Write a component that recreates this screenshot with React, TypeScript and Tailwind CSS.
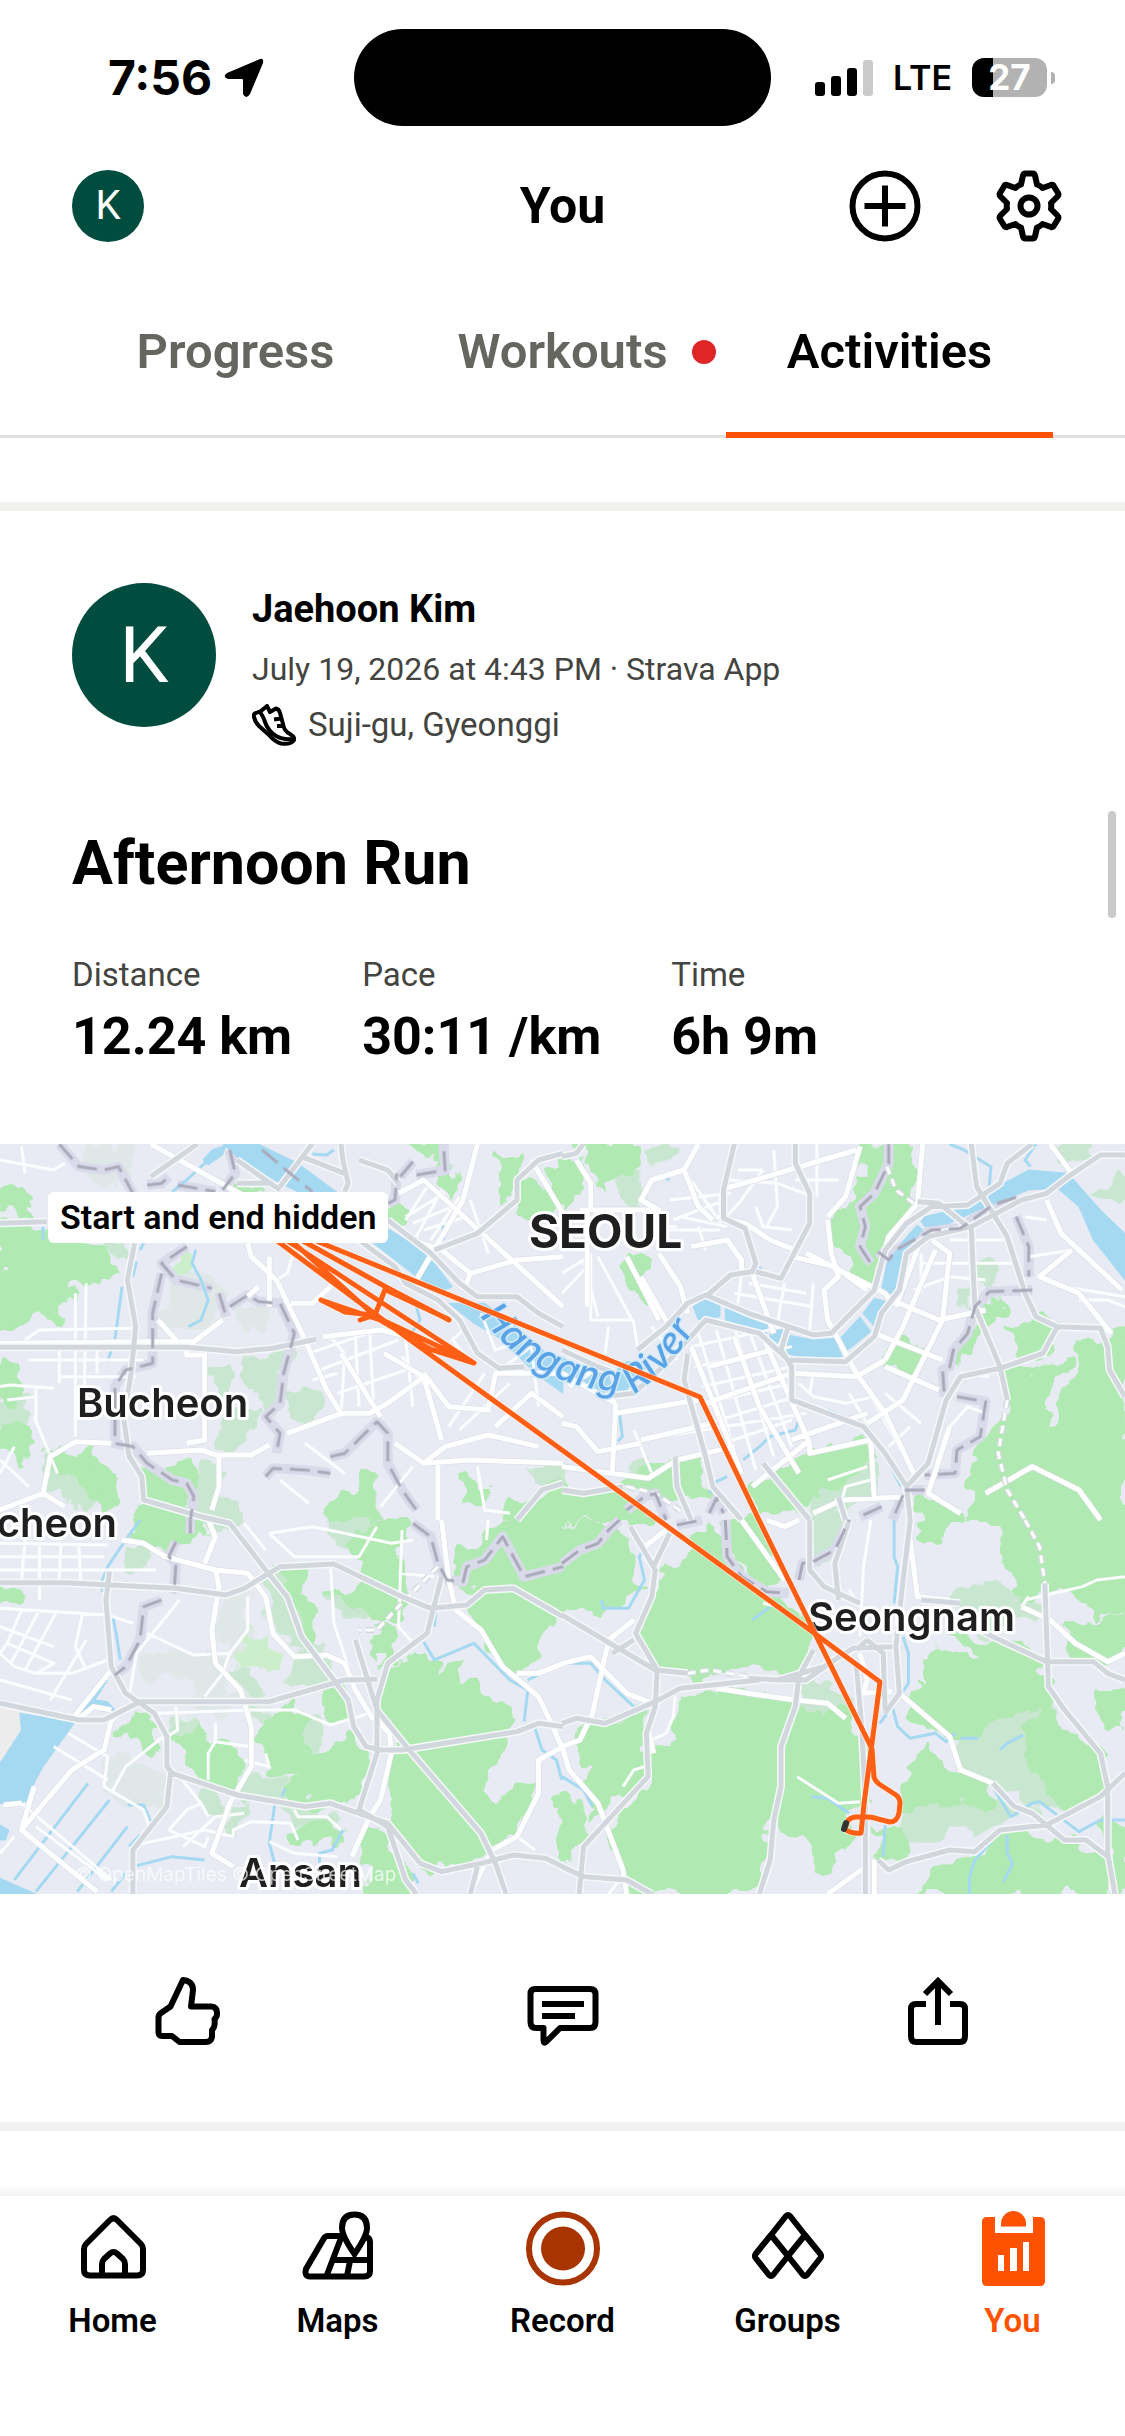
import React from 'react';

/* ---------- map data ---------- */

// The map is stored as four tiles that share one drawing scale.
const tiles = [
  {
    id: 'nw',
    transform: 'matrix(0.359 0 0 0.3333 0 -4)',
    pale: 'M140 940L260 1060 240 1100 190 1080 135 1030Z M320 305 370 310 370 330 340 345 300 320Z M10 770 90 800 60 850 0 850Z M560 970L600 960 600 1080 660 1110 620 1150 540 1140 540 1040Z M585 680L640 665 655 730 600 760Z M700 650L780 640 780 740 760 820 725 830 740 740 690 730Z M620 840L700 830 700 880 650 920 620 890Z M800 760L880 740 900 800 870 840 820 830Z M1490 990 1568 980 1568 1050 1500 1030Z',
    faint: 'M470 450L510 410 560 410 620 470 590 530 500 550 450 530Z M250 20L380 30 360 110 330 140 230 90Z M660 510 740 510 740 550 700 560Z',
    lime: 'M500 370L540 350 540 410 500 400Z',
    park: 'M0 150L60 160 80 180 60 195 75 225 0 230Z M0 265L130 265 190 310 300 340 280 375 310 400 240 430 190 440 200 480 170 500 150 540 110 520 90 540 40 560 0 570Z M150 935L240 940 270 975 320 1030 330 1070 300 1110 270 1060 220 1030 180 985 150 975Z M0 640L60 650 50 700 30 780 0 760Z M10 850 80 860 100 920 60 960 40 940 10 930Z M400 990L460 1000 520 970 540 1030 500 1110 400 1080Z M350 1130L400 1085 530 1130 530 1200 400 1200Z M1010 1000L1040 1030 1030 1080 1050 1140 940 1140 930 1080 980 1050Z M1290 1015L1340 1040 1330 1090 1290 1100Z M1530 1060 1568 1040 1568 1140 1420 1140 1440 1090Z M1090 205L1130 210 1110 250 1080 240Z M1240 100 1280 110 1250 170 1230 150Z M1150 20L1240 20 1240 90 1200 60Z M1380 30L1460 40 1430 90 1450 140 1400 170 1380 110Z M1460 155L1540 150 1530 210 1500 260 1460 200Z M1530 80 1568 60V200L1540 160Z M660 140L720 145 740 160 660 165Z',
    water: 'M620 12L720 12 830 70 930 150 1080 265 1190 340 1260 440 1230 455 1160 410 1040 310 900 190 780 130 680 70Z M1250 490L1350 490 1420 540 1500 620 1568 680V760L1490 700 1400 600 1320 550Z M565 60L590 30 630 15 620 45 580 75Z',
    stream: 'M580 60L520 120 480 155 M870 42 910 45 930 30 M120 260V300 M400 310 390 330 M380 365 370 410 M340 440 320 600 M310 630 300 665 M545 330 535 370 560 420 580 480 560 540 525 560 M1235 240V300 M1160 500 1170 540 1140 590',
    minor: 'M0 740L30 735 150 745 M20 780 100 770 M95 830 160 1000 M100 850V740 M165 610V730 M210 460V890 M240 430L235 760 M70 600 110 570 370 565 M270 620V700 M80 660H400 M170 710H380 M860 640 1080 560 M890 690 1110 600 M940 760 1130 690 M950 830 960 640 920 590 M1000 800 990 590 M1040 780 1030 580 M1150 800 1130 600 M1130 230L1240 160 M1150 250 1260 200 M1180 270 1300 230 M1190 140 1130 240 M1230 150 1160 290 M1280 170 1200 300 M1380 700 1480 620 1500 800 M1250 860 1350 700 M1280 870 1420 730 M1310 180 1360 340 M0 60L150 90 180 70 M60 20 70 100 M1340 520 1380 630 1460 600 1400 530 M780 1020L860 1090 M960 1000 850 910 M1150 980 1060 1100 M0 960 80 1040 M40 920 0 1000 M820 330 800 400 770 420 M1300 560 1260 600 1300 650 M1120 650 1200 760 M870 720 940 700 M1330 980 1350 1110 1420 1120',
    major: 'M0 610L400 605H540L620 540 M440 540 490 600 M410 940L560 930 600 945H700L750 915 M610 945V1040L590 1110 M120 1060L140 950 210 905 310 910 M120 1060L0 1110 M120 1060L180 1100 M520 620V645H570V900L520 910 M690 310L700 350 770 420 850 600 910 750 950 820 1030 820 1080 790 1180 710 M750 350V500 M950 820L800 880 M1100 910L1180 970 1310 960 1568 970 M1180 700L1250 800 1360 810 1380 700 1560 700 M1180 970 1240 920 1360 885 1500 920 M1180 600 1060 570 900 590 M1300 430L1310 400 1230 330 1150 300 M1310 400 1440 360 1568 350 M1480 60 1568 220 M420 12L700 180 M1110 160L1180 120 1568 500 M1220 1140V960 M1060 830 950 640 M1070 640 1180 710 1230 900 M1380 860 1480 760 1568 830 M1330 12 1290 180 1160 420 M720 440 690 470 M810 490 870 490 930 430',
    highway: 'M0 622H520L660 635 760 625 880 598 M0 250L130 245 M375 310L355 420 378 560 365 700 345 840 360 950 395 1010 400 1080 560 1130 640 1150 M1080 240L1200 340 1280 430 1330 470 1440 470 1500 520 1568 560 M1000 300 1100 380 1130 430 1220 480 1280 540 1330 640 1390 685 1460 680 M420 110L500 50 550 12 M660 60 780 150 M780 140L850 40 870 12 M840 50L960 100 M1000 60 1080 90 1110 130 M950 12 955 60 970 130 960 155 M1210 330L1330 280 1440 180 1440 120 1500 60 1568 40 M660 130H760 M1440 1140 1510 1050 1568 1030',
    tunnel: '',
    border: 'M165 12L220 80 290 90 330 80 370 160 M410 135 450 130 470 110 M495 135 600 155 M640 30 655 100 620 150 M730 30 870 155 M1115 110 1150 65 M1160 105 1240 90 1235 12 M1080 190 1100 180 1105 100 M520 320 450 370 490 420 590 445 M450 400L425 520V670L350 690 320 740 320 910 370 920 410 970 480 1020 520 1030 540 1070 530 1140 M610 460 630 530 M640 500 690 465 720 485 780 490 820 580 790 700 780 790 740 830 780 880 770 940 M740 1010 760 985 850 990 920 1000 M920 950 960 940 1050 845 1080 880 1080 970 1120 1050 1160 1110',
  },
  {
    id: 'ne',
    transform: 'matrix(0.359 0 0 0.3333 562 -4)',
    pale: 'M1160 370 1200 375 1195 430 1160 420Z M1100 440 1150 450 1140 490 1110 470Z M160 100 210 90 215 180 190 210Z M230 30 310 30 290 70 240 60Z M1400 12H1470L1480 50 1410 60Z M1568 100 1500 150 1490 170 1568 170Z M200 970 240 960 240 1000 200 1000Z M700 1060 840 960 870 1060 760 1130 700 1130Z',
    faint: '',
    lime: '',
    park: 'M40 12L200 12 190 90 150 100 120 140 80 80 50 40Z M0 40L40 70 30 100 50 160 0 210Z M160 360L185 350 195 375 240 365 250 390 225 420 245 475 190 455 180 400Z M850 20L985 30 990 100 970 140 950 200 930 260 880 290 870 310 880 400 840 430 800 380 810 340 760 300 770 220 830 180 830 120Z M930 605L1000 635 980 700 910 665Z M1180 500L1230 490 1210 550 1160 580 1130 650 1100 680 1130 590Z M1250 560L1350 545 1370 560 1350 640 1280 660 1270 610Z M1568 580L1500 620 1470 590 1440 610 1420 720 1390 760 1380 850 1340 880 1320 800 1350 750 1400 660 1330 690 1240 700 1250 800 1190 860 1160 950 1130 1010 1140 1140H1568Z M260 990L380 950 410 1010 390 1050 430 1090 300 1080 180 1020Z M530 1050L640 960 760 930 840 900 860 960 800 1000 780 1030 700 1060 660 1110 620 1100 560 1120Z M0 1060L150 1060 160 1090 200 1100 250 1140H0Z M1000 1060L1090 1110 1120 1140H1010Z M690 920 730 905 700 935Z',
    water: 'M180 665L240 670 220 700 180 750 140 757 150 690Z M0 650L60 700 130 700 140 755 90 760 0 700Z M365 500L400 475 440 490 440 530 380 540Z M455 505L575 550 570 580 455 540Z M590 560L620 570 600 610 578 590Z M630 585L700 600 760 595 780 650 700 660 620 640Z M775 595L830 530 860 575 820 610 790 635Z M838 520L870 475 905 485 880 540 870 560Z M888 460L905 370 960 290 990 255 1005 270 950 340 925 460Z M1000 245L1010 230 1090 210 1160 180 1230 130 1300 90 1410 100 1500 210 1568 280V420L1480 300 1440 200 1380 145 1300 150 1180 200 1080 250 1010 260Z',
    stream: 'M1080 12 1120 30 1150 50 1195 80 1190 140 M1320 12 1290 60 1305 80 M335 90 365 125 M290 120 300 115 M160 820 168 890 155 905 M740 810 850 860 890 930 945 1040 M660 840 650 870 580 890 550 920 505 960 M460 1010 430 1025 410 1060 M440 425 415 455 M560 400 550 380',
    minor: 'M380 580L500 1000 M430 570 540 990 M480 560 590 950 M520 570 640 920 M560 590 690 910 M360 620 620 560 M370 680 640 620 M390 740 640 680 M400 790 640 730 M410 850 650 770 M220 900 680 820 M450 910 640 840 M700 700 690 760 M820 690 980 1000 M850 850 800 760 M740 1020 850 980 M900 760 1000 850 M970 860 910 920 M1080 860 1130 800 1180 820 M1000 340V460 M1080 300H1250 M1000 370H1260 M980 450 1080 410 1180 420 M450 240 500 180 560 90 M490 90H560 M460 120 600 130 700 170 M540 200 560 260 640 270 M590 30 600 200 570 260 M710 12V170 M650 120H770 M480 460 700 500 M500 400 490 490 M520 430 680 460 M500 520 600 560 M700 430 690 570 M620 430 600 550 M80 340V540H200 M0 400 60 360 100 530 M0 460 70 380 M100 350 200 550 210 620 M240 260H320 M300 270H440 M340 90 430 230 M310 240 380 210 460 180 M300 180 470 160 M330 230 460 260 M380 260 400 330 M440 160V250 M660 730 700 770 790 790 870 770 M1110 700 1190 710 M1290 230 1350 240 M1300 350 1420 330 M1400 440 1568 470 M200 870 250 1000 M130 560 120 640 M250 560 320 660 M1440 480 1520 480 1568 500 M780 1080 790 1040 860 1020',
    major: 'M40 60 80 130V210 M180 350 270 540 M220 410 300 560 M70 210V500 M50 210H270L220 180 250 120 340 90 380 12 M270 340 330 440 350 520 M340 90 380 200 420 240 M360 320 460 300 500 360V400 M440 150 570 110 820 30 M430 230 510 250 580 300 650 330 M640 350 760 380 850 450 M680 340 900 460 920 490 M740 240 750 340 770 410 730 450 740 540 820 700 M830 20 790 170 740 230 M530 400 590 580 M380 780 150 820 M220 900 420 850 M360 620 500 1000 M480 590 550 800 660 1000 M560 590 690 910 M410 680 620 620 M400 790 640 700 820 710 900 660 M940 490 1050 540 1180 510 M870 580 1060 660 M900 680 1050 750 M900 660 950 560 1040 330 M850 850L950 780 1060 540 1080 340 1030 300 M640 900 850 820 M820 700 900 820 980 1000 M1000 300 930 500 M1005 12L990 190 910 290 880 400 M1360 12 1420 100 M1350 180 1390 280 1560 450 M1420 330 1330 410 1440 460 1530 580 M0 850 40 860 100 935 220 910 M150 790 140 1000 M0 980 240 1015 320 960 480 920 M690 910V940L860 900 M690 900 530 1040 M700 1120 780 1080 960 1070 M860 900 870 1080 M1080 860 1020 1060 1110 1120 M1180 1060 1310 980 1440 1050 1500 1140 M0 700 150 790 M100 680 20 740',
    highway: 'M0 50 40 40 60 12 M0 630L100 680 150 700 M120 770L200 760 300 660 400 540 550 580 630 660 790 665 870 590 890 520 940 450 960 340 1020 290 1140 260 1280 180 1350 160 1410 110 1500 45H1568 M210 630L290 560 350 490 400 465 520 520 700 585 750 580 870 450 900 330 960 250 1030 200 1130 195 1220 130 1240 70 1310 12 M480 12L450 150 450 235 510 265 540 370 530 395 470 405 400 470 M540 395L610 415 690 250 690 160 650 70V12 M630 560 610 630 640 680V780L840 860 900 940 960 1040 M350 640L340 720 400 950 420 1040 500 1140 M1140 12L1155 140 1240 290 1290 460 1320 530 1380 560 1500 565 1520 620 1525 690 1568 770 M1140 260L1150 500 1220 680 1240 780 M1380 560L1340 640 1220 685 1110 710 1070 780 1020 970 960 1040 970 1140 M560 970L690 1140 M315 950L320 1040 360 1140 M990 185 1050 190 1130 260 M770 1070 790 1140 M0 1050 60 1060 170 1040',
    tunnel: 'M1240 780L1215 940 1240 1050 1290 1140 M905 80 930 150 980 190 M180 1040 260 1060 340 1120',
    border: 'M910 12 910 70 870 160 830 200 845 260 830 320 860 370 M880 335 910 360 930 330 1030 270 1110 265 1200 195 1270 170 M1265 230 1300 320V410 M1310 450 1190 455 1150 500 1130 580 1090 630 1080 680 1060 690 1065 770 M1100 770 1180 785 1165 890 1100 930 1095 1000 1010 1005 M955 1050 1010 1050 M950 1065 920 1140 M890 1100 830 1130 M180 1110 230 1070 260 1060 290 1140 M410 1120 430 1075 450 1120',
  },
  {
    id: 'sw',
    transform: 'matrix(0.359 0 0 0.3333 0 376)',
    pale: 'M350 90H420V130H370Z M740 200L800 180 830 290 860 380 930 400 920 480 810 490 850 400 770 310Z M670 440 700 440 725 520 700 530Z M690 760L780 780 790 830 680 820Z M480 600 530 590 560 620 490 660Z M870 590 900 620 880 680 840 680Z M560 830L610 850 610 880 570 890Z M640 860 680 840 660 930 630 930Z M930 0H1050L1030 80 970 90 920 40Z M710 580H760L740 620 710 610Z M790 860 900 850 950 900 940 930 880 890 800 900Z M930 220 1040 260 1000 300 940 270Z',
    faint: 'M380 420L440 380 560 410 640 420 620 520 560 530 520 480 420 470Z M300 710L400 720 450 760 440 880 400 870 290 800Z M540 540H760L740 575H540Z M620 240L690 220 690 330 640 400 610 350Z',
    lime: 'M650 390L700 340 740 340 730 380 780 400 750 440 650 410Z',
    park: 'M370 0H560L570 40 500 90 430 90 370 50Z M0 195L60 230 50 260 0 250Z M970 80L1050 20 1120 10 1110 90 1130 150 1140 240 1080 300 1040 310 1030 270 940 220 1030 170 1010 120Z M1280 80L1340 70 1440 0H1568V280L1520 330 1490 370 1500 420 1420 440 1380 380 1340 330 1310 260 1320 200 1270 180Z M790 150H845L860 290 870 400 840 320Z M1040 350L1080 330 1120 370 1100 420 1050 420Z M900 510L960 500 965 610 930 600 890 560Z M1080 450L1160 415 1210 430 1200 480 1240 450 1290 440 1270 500 1330 500 1370 550 1430 600 1390 660 1380 720 1340 790 1400 850 1430 800 1470 800 1440 940 1350 990 1310 1010 1200 1050 1130 960 1070 900 1090 700 1140 690 1060 620 1050 540Z M340 600L360 580 420 585 410 610 440 650 400 670 330 640Z M490 660L520 670 560 620 580 680 600 660 660 680 670 780 650 820 560 780 540 760 500 700Z M740 600L820 570 860 600 830 650 850 690 920 690 980 660 1020 720 1010 790 990 850 920 830 880 850 850 830 810 840 800 790 850 770 750 750 760 690 720 660Z M830 920L880 890 930 900 940 930 930 960 880 990 840 960Z M1030 930L1080 940 1120 1060 1140 1122H1040L1015 1030Z',
    water: 'M55 580L210 605 120 740 90 800 95 830 50 855 0 850V730L60 630Z M300 480L265 540 300 545 320 570 290 575 260 560 230 590 210 580Z M0 915L25 930 15 960 0 960Z M0 1075L100 1122H0Z',
    stream: 'M245 790L40 1080 M305 840L100 1115 M355 920L215 1115 M390 945L360 980 M350 1060 310 1115 M370 1040 480 1010 570 1020 M355 855L400 855 420 905 M765 855L750 970 765 1030 M795 805 785 830 M955 930L925 990 890 1000V1030 M390 0L350 60 300 140 285 180V215 M315 290L325 350 335 420 M1220 190L1210 320 M1180 365L1210 420 1320 370 1420 480 1470 510 1460 605 M1490 625L1510 690 1550 720 1565 780 M1165 1090L1150 1060 M1470 480 1568 430',
    minor: 'M0 70 300 75 M0 110 290 110 M0 150 435 150 M70 60 60 180 M110 70V240 M170 70 165 180 M220 80 225 180 M0 265 300 285 370 310 M60 270 20 370 0 400 M110 270 30 430 M160 270 70 450 M230 280 210 380 240 450 M0 320 150 380 M20 370 150 430 100 460 40 440 0 400 M240 360 140 540 M0 480 200 540 M300 420 200 460 100 460 M500 240 380 400 360 530 M410 340 540 405 640 400 690 330V230 M570 530 620 460 640 400 M440 580 700 570 820 570 920 615 1030 580 M490 560 495 630 450 660 M600 610V665L580 700V780 M600 665 700 680 M740 700 750 740 680 720 M455 650 350 740 310 820 M150 680 300 780 M190 640 300 710 290 800 400 870 420 930 M60 850 180 960 310 1080 M100 920 300 1080 M500 770 560 850 580 890 M470 930 520 870 560 850 M470 930 570 980 580 950 M380 975 570 930 650 950 M510 980 600 890 680 880 M650 950V930L700 905 810 910 830 960 M750 965 820 1000 940 1010 M820 870 830 890 910 890 950 930 M750 40 820 110 1000 110 1050 20 M750 40 870 20 960 40 1090 70 1150 60 M920 120 930 310 970 440 M1120 30 1110 320 1160 380 M1110 160 1210 170 M680 10 740 90 M1360 0 1355 60 M0 1000 40 950 M1440 950 1490 990',
    major: 'M340 60L400 70 460 110 600 150 690 160 740 230 760 340 820 410 910 405 960 430 990 510 1040 600 M1050 600 1085 640 1090 700 1060 840 1030 890 980 1010 M580 0 600 50 570 130 M600 150L610 200 590 330 600 430 670 510 700 620 700 740 640 850 590 1000 650 1040 M1230 0L1250 180 1270 270 1340 330 1400 440 1500 530 1540 620 1568 690 M1440 460 1500 460 1568 430 M1568 680L1500 720 1500 820 1440 950 1370 990 1310 1122 M310 450L210 585 M380 540L310 600 290 690 200 750 60 930 270 1115 M215 600 260 560 310 570 M95 800 60 930 M10 855 60 850',
    highway: 'M560 -10L640 10 740 150 800 230 840 350 930 480 970 540 985 620 1020 680 1060 690H1120L1440 635 1500 610 1568 620 M0 188H180L490 205 630 225 680 205 780 140 930 132 1120 230 1200 265 1300 255 1350 210 1430 205 1568 290 M305 155L295 240 310 440 350 520 430 580 465 650V740L480 760 660 825 850 860 920 850 1080 910 1170 1030 1230 1055 1340 1030 1430 1005 1520 1015 1568 1040 M0 550L220 600 290 600 390 545H750L960 480 1050 478 M475 760L465 860 370 990 370 1122 M990 360L1050 570 1140 690 1260 840 1340 940 1380 1030 1410 1122 M1230 170L1190 340 1080 430 1050 540V700L1000 870 1080 920 1130 1080 1160 1122 M1330 1040 1310 1122',
    tunnel: 'M1220 140 1110 260 1050 330 1000 330',
    border: 'M530 0V40 M490 65 470 110 490 130 485 220 M450 240 400 260 390 360 350 440 320 465 M1150 10 1200 50 1220 130 1245 180 1290 185 1300 140 1350 120 1400 50 1460 170 1568 140',
  },
  {
    id: 'se',
    transform: 'matrix(0.359 0 0 0.3333 562 376)',
    pale: 'M1090 240L1180 200 1280 220 1330 290 1200 330Z M670 490 800 510 780 590 650 560Z M690 0H800L770 80 690 120Z M220 570 230 600 100 620Z M1120 640L1250 560 1320 500 1400 640 1480 720 1440 850 1330 880 1210 790 1110 750Z M960 850 1080 800 1180 800 1250 870 1150 920 960 960Z',
    faint: '',
    lime: '',
    park: 'M0 20L100 20 170 60 210 120 200 200 160 240 100 300 60 260 0 270Z M300 120L330 150 400 20 470 100 520 190 610 240 690 320 700 390 620 470 520 450 370 470 270 450 220 340 260 200Z M470 0H520L620 170 560 190 480 80Z M60 620L220 600 240 660 230 770 100 880 70 800 80 740 50 690Z M0 840 70 870 60 960 20 1010 0 1010Z M320 530L480 510 600 540 640 560 600 740 590 900 540 960 560 1040 500 1122H200L130 960 240 790 250 700 330 660 300 620Z M660 560L700 550 720 580 780 570 800 610 850 700 830 850 820 880 780 890 800 940 750 1060 700 1040 680 960 610 920 610 780 640 640Z M880 930L950 940 960 1000 880 1020Z M1000 0H1100L1060 60 1000 50Z M1240 0H1568V260L1480 280 1440 220 1400 200 1290 240 1280 140 1230 90Z M1000 420L1100 400 1150 430 1200 410 1280 440 1360 470 1340 560 1290 570 1240 590 1160 610 1110 640 1030 640 960 600 1000 500Z M1340 560L1420 660 1500 710 1500 820 1400 870 1340 800 1290 680Z M960 790L1010 690 1090 750 1180 790 1200 830 1080 850 960 880Z M1400 330L1568 280V400L1500 420 1430 400Z M1500 520L1550 530 1560 620 1510 640 1480 570Z M990 1122L1080 1040 1180 1000 1240 930 1400 960 1500 1010 1520 1122Z M1530 900 1568 940V1122H1545Z M1080 330 1180 350 1340 420 1330 450 1160 390Z',
    water: '',
    stream: 'M110 240L115 265 185 265 230 180 215 110 240 70 265 45 M0 430L80 430 120 480 200 560 M0 770L60 810 85 860 M925 0V110L935 140 925 250 M950 350L965 400V490L920 560 885 610 M920 560L935 620 970 655 1040 640 1070 665 1095 640 M1110 655H1160 M1220 690L1240 670 1285 645 M695 830L740 835 800 880 M900 915L895 1010 M1200 960L1150 1020 1135 1070V1122 M1240 945V1000L1255 1030 1230 1085 M1200 800 1250 890 1310 850 1330 845 1440 935 1500 900 1568 900 M530 300L580 260',
    minor: 'M860 0 840 140 830 350 M315 530 310 590 290 640 250 660V700 M230 740 200 750 170 800 M655 770L770 850 830 845 M1290 240L1450 200 1490 180 1568 170 M1300 230 1280 260 M800 210 830 260 M130 1122 160 1080 M560 250 600 260',
    major: 'M0 430L80 410 180 520 240 545 M200 300L130 360 85 580 50 660 0 680 20 750 100 850 170 1050 180 1122 M430 505L550 525 650 540 740 550 790 595 M830 400 850 480 840 520 920 515 M970 60L990 230 1080 240 M500 0 620 180 M570 0 620 20 660 0 M940 520L1080 650 1110 750 1200 790 M1280 260L1360 300 1430 370 1520 425 1568 400 M870 1020V1122 M840 1045 740 1122 M230 80 290 30 M240 620 255 700',
    highway: 'M0 285L260 450 350 460 M520 475L600 480 730 440 810 385 920 380 M0 610L40 595 120 610 260 545 330 505 550 480 M600 480H680L740 435 M190 20L260 150 250 230 205 340 265 450 260 560 235 640 240 770 60 980 48 1122 M300 40 255 140 M700 390L660 470 650 560 610 680 610 800 590 900 580 1020 550 1122 M970 0L950 180 930 380 940 520 900 580 M850 360L895 400 900 570 M850 360 820 390 M690 0L690 150 730 200 830 250 M820 440L835 620 845 850V1122 M800 0L760 130 770 240 M1345 190L1355 500 1400 570 1500 700 1520 800V1000L1540 1122 M1000 240 1110 250 M1110 300L1200 350 1350 425H1480L1520 460 1568 480 M1568 760L1500 830 1350 915 1220 930 1150 995 1080 990 960 1025 910 1050 880 1020 M1200 790L1260 860 1310 880 1400 960H1460L1520 1010 M0 1040L60 1070 180 1080 250 1122 M200 360 140 400',
    tunnel: 'M1290 0L1330 80 1345 190 M350 460L410 450 520 470',
    border: 'M0 130 50 90 100 70 130 30 160 0 M320 15 390 0 M455 0 460 110 500 170 570 215 630 220 M660 180 670 130 700 125 760 90 800 0',
  },
];

type LayerKey = 'pale' | 'faint' | 'lime' | 'park' | 'water' | 'stream' | 'minor' | 'major' | 'highway' | 'tunnel' | 'border';

interface LayerStyle {
  key: LayerKey;
  fill?: string;
  stroke: string;
  width: number;
  dash?: string;
  ragged?: boolean;
}

// painted from bottom to top
const layers: LayerStyle[] = [
  { key: 'faint', fill: '#dfe8e7', stroke: '#dfe8e7', width: 5, ragged: true },
  { key: 'pale', fill: '#c9e7d0', stroke: '#c9e7d0', width: 6, ragged: true },
  { key: 'park', fill: '#b0e9b2', stroke: '#b0e9b2', width: 6, ragged: true },
  { key: 'lime', fill: '#cdeecb', stroke: '#cdeecb', width: 4, ragged: true },
  { key: 'border', stroke: '#dadbea', width: 10 },
  { key: 'water', fill: '#a5d9f1', stroke: '#a5d9f1', width: 1 },
  { key: 'stream', stroke: '#a5d9f1', width: 3 },
  { key: 'minor', stroke: '#fcfdfe', width: 3 },
  { key: 'major', stroke: '#d9dce3', width: 6 },
  { key: 'major', stroke: '#ffffff', width: 5 },
  { key: 'tunnel', stroke: '#d3d8df', width: 6, dash: '8 5' },
  { key: 'tunnel', stroke: '#ffffff', width: 3, dash: '8 5' },
  { key: 'highway', stroke: '#f6f8fa', width: 8 },
  { key: 'highway', stroke: '#d2d7de', width: 5 },
  { key: 'border', stroke: '#a9a9b9', width: 3, dash: '20 8' },
];

const cities = [
  { name: 'SEOUL', x: 529, y: 104, anchor: 'start', size: 'text-[46px] font-bold' },
  { name: 'Bucheon', x: 77, y: 273, anchor: 'start', size: 'text-[40px] font-semibold' },
  { name: 'Incheon', x: 117, y: 393, anchor: 'end', size: 'text-[40px] font-semibold' },
  { name: 'Seongnam', x: 808, y: 487, anchor: 'start', size: 'text-[40px] font-semibold' },
  { name: 'Ansan', x: 239, y: 743, anchor: 'start', size: 'text-[40px] font-semibold' },
] as const;

const route =
  'M294 92L386 143 449 176 M386 143L375 171 360 176 M386 146L448 175 M309 94L700 253 759 376 872 605 874 633 Q875 637 879 640 L896 651 Q900 654 900 659 L899 669 Q897 678 890 678 L878 675 Q870 672 855 673 Q847 674 846 682 M846 686Q852 690 861 689 L864 660 880 538 810 486 562 306 406 193 276 96 M280 92L474 219 430 205 380 176 321 156 M284 90L376 173 474 219 M321 156L345 168 373 171';

const RouteMap: React.FC = () => (
  <div className="relative overflow-hidden bg-[#e8ebf4]">
    <svg viewBox="0 0 1125 750" className="block w-full font-['Inter',sans-serif]" role="img" aria-label="Route map">
      <filter id="ragged" filterUnits="userSpaceOnUse" x="-20" y="-20" width="1165" height="790">
        <feTurbulence type="fractalNoise" baseFrequency="0.035" numOctaves="3" seed="4" />
        <feDisplacementMap in="SourceGraphic" scale="34" xChannelSelector="R" yChannelSelector="G" />
      </filter>

      <g strokeLinecap="butt" strokeLinejoin="round">
        <path d="M0 558L20 568 22 590 0 620Z" fill="#ececec" />
        {layers.map((layer, idx) => (
          <g
            key={idx}
            fill={layer.fill ?? 'none'}
            stroke={layer.stroke}
            strokeWidth={layer.width}
            strokeDasharray={layer.dash}
            filter={layer.ragged ? 'url(#ragged)' : undefined}
          >
            {tiles.map((tile) => (
              <path key={tile.id} d={tile[layer.key]} transform={tile.transform} vectorEffect="non-scaling-stroke" />
            ))}
          </g>
        ))}
      </g>

      <g stroke="#ffffff" strokeWidth="6" strokeLinejoin="round" paintOrder="stroke" fill="#1f1f21">
        {cities.map((city) => (
          <text key={city.name} x={city.x} y={city.y} textAnchor={city.anchor} className={city.size}>
            {city.name}
          </text>
        ))}
      </g>

      <path id="river-west" d="M480 172Q530 240 616 248" fill="none" />
      <path id="river-east" d="M634 250Q672 225 700 176" fill="none" />
      <g className="text-[37px] italic font-medium" fill="#5aa3e6" stroke="#d3ebf8" strokeWidth="3" paintOrder="stroke">
        <text><textPath href="#river-west">Hangang</textPath></text>
        <text><textPath href="#river-east">River</textPath></text>
      </g>

      <g fill="none" strokeLinecap="round" strokeLinejoin="round">
        <path d={route} stroke="#fff3e6" strokeWidth="7" opacity="0.6" />
        <path d={route} stroke="#ff5e15" strokeWidth="5" />
        <path d="M846 679L844 685" stroke="#333333" strokeWidth="6" />
      </g>

      <text x="75" y="737" fill="#ffffff" opacity="0.7" className="text-[19px]">
        © OpenMapTiles © OpenStreetMap
      </text>
    </svg>

    <span className="absolute left-12 top-12 rounded-md bg-white px-3 text-[34px] leading-[51px] font-semibold">
      Start and end hidden
    </span>
  </div>
);

/* ---------- icons ---------- */

const icon = { fill: 'none', stroke: 'currentColor', strokeWidth: 6, strokeLinejoin: 'round' as const };

const LocationIcon = () => (
  <svg viewBox="0 0 40 40" className="size-10" fill="currentColor">
    <path d="M36 1Q40 0 39 5L26 36Q22 42 19 36V22Q19 21 18 21H4Q-2 19 3 15Z" />
  </svg>
);

const SignalIcon = () => (
  <svg viewBox="0 0 58 36" className="h-9 w-[58px]">
    <rect x="0" y="22" width="10" height="14" rx="3" />
    <rect x="16" y="16" width="10" height="20" rx="3" />
    <rect x="32" y="8" width="10" height="28" rx="3" />
    <rect x="48" y="0" width="10" height="36" rx="3" fill="#cbcbcb" />
  </svg>
);

const PlusIcon = () => (
  <svg viewBox="0 0 72 72" className="size-18" {...icon}>
    <circle cx="36" cy="36" r="32.5" />
    <path d="M36 15.5V56.5M15.5 36H56.5" />
  </svg>
);

const GearIcon = () => (
  <svg viewBox="0 0 72 72" className="size-18" {...icon}>
    <path d="M30 5.5Q30.500 3.500 32.500 3.500H39.500Q41.500 3.500 42 5.500L44 14.500Q47 15.500 49.500 18L58 15Q60 14.500 61 16.500L65 23Q66 25 64.500 26.500L58 33Q58.500 36 58 39L64.500 45.500Q66 47 65 49L61 55.500Q60 57.500 58 57L49.500 54Q47 56.500 44 57.500L42 66.500Q41.500 68.500 39.500 68.500H32.500Q30.500 68.500 30 66.500L28 57.500Q25 56.500 22.500 54L14 57Q12 57.500 11 55.500L7 49Q6 47 7.500 45.500L14 39Q13.500 36 14 33L7.500 26.500Q6 25 7 23L11 16.500Q12 14.500 14 15L22.500 18Q25 15.500 28 14.500Z" />
    <circle cx="36" cy="36" r="8.500" />
  </svg>
);

const ShoeIcon = () => (
  <svg viewBox="0 0 44 42" className="h-[42px] w-11" {...icon} strokeWidth={4}>
    <path d="M2 13Q1 10 4 9L9 7 15 2 18 8 24 4.500Q27 5 28 9L31 20Q32 27 38 30Q43 33 42 36Q39 41 29 39.500Q23 38 17 31L7 22Q3 18 2 13Z" />
    <path d="M8 8Q12 14 13 18Q16 27 24 32Q31 36 41 35M22 15.500L29 14.500M25 22H32" />
  </svg>
);

const ThumbIcon = () => (
  <svg viewBox="0 0 72 72" className="size-18" {...icon}>
    <path d="M31 4Q41 5 41 14L39 30.500H59Q65.500 31 65 38Q65 41 62.500 43Q63.500 51 60 54V61Q59 66 54 66H27.500L20 60H10Q6.500 60 6.500 56V42Q6.500 38.500 9 37L18.500 30.500Z" />
  </svg>
);

const CommentIcon = () => (
  <svg viewBox="0 0 72 72" className="size-18" {...icon}>
    <path d="M8 13H63Q68.500 13 68.500 18V46Q68.500 52 63 52H33L19 66Q16.500 68 16.500 64V52H9Q3.500 52 3.500 46V18Q3.500 13 8 13Z" />
    <path d="M15 28H57M15 40H48" />
  </svg>
);

const ShareIcon = () => (
  <svg viewBox="0 0 72 72" className="size-18" {...icon} strokeLinejoin="miter">
    <path d="M24 28H14Q9 28 9 33V60Q9 66 14 66H58Q63 66 63 60V33Q63 28 58 28H48" />
    <path d="M36 49V6M23 18L36 5L49 18" />
  </svg>
);

const HomeIcon = () => (
  <svg viewBox="0 0 72 76" className="h-19 w-18" {...icon}>
    <path d="M7 38Q7 35 9 33L33 9Q36.500 5.500 40 9L64 33Q66 35 66 38V59Q66 64.500 60 64.500H13Q7 64.500 7 59Z" />
    <path d="M25 64V53Q25 50 27 48L33 42.500Q36.500 39.500 40 42.500L46 48Q48 50 48 53V64" />
  </svg>
);

const MapsIcon = () => (
  <svg viewBox="0 0 72 76" className="h-19 w-18" {...icon} strokeLinejoin="miter">
    <path d="M40 25H26Q23 25 21.500 28L4 58Q2 65.500 8 65.500H62Q68 65.500 68 60V31Q68 27 64 26" />
    <path d="M39 27L24.500 65M31 49H68M48 50L45 65" />
    <path d="M52.500 43Q40 25 40 17Q40 3.500 52.500 3.500Q65 3.500 65 17Q65 25 52.500 43Z" fill="#ffffff" />
  </svg>
);

const RecordIcon = () => (
  <svg viewBox="0 0 76 76" className="size-19" fill="none">
    <circle cx="38" cy="37.500" r="34" stroke="#a83400" strokeWidth="6" />
    <circle cx="38" cy="37.500" r="22" fill="#a83400" />
  </svg>
);

const GroupsIcon = () => (
  <svg viewBox="0 0 72 76" className="h-19 w-18" {...icon}>
    <path d="M19 24L34 5Q36 3 38 5L53 24L36 45ZM19 24L4 42.500Q2 45 4 47.500L17 64Q19 66 21 64L36 45ZM53 24L68 42.500Q70 45 68 47.500L55 64Q53 66 51 64L36 45Z" />
  </svg>
);

const YouIcon = () => (
  <svg viewBox="0 0 72 76" className="h-19 w-18" fill="currentColor">
    <path d="M10 6H18V22H56V6H63Q68 6 68 11V70Q68 75 63 75H10Q5 75 5 70V11Q5 6 10 6ZM21 44V60H27V44ZM33 37V60H40V37ZM46 31V60H52V31Z" fillRule="evenodd" />
    <path d="M24 15.500V12.500A12.500 12.500 0 0 1 49 12.500V15.500Z" />
  </svg>
);

/* ---------- page ---------- */

const tabs = [
  { name: 'Progress', style: 'border-transparent text-[#666660]', dot: false },
  { name: 'Workouts', style: 'border-transparent text-[#666660]', dot: true },
  { name: 'Activities', style: 'border-[#ff5200] text-black', dot: false },
];

const stats = [
  { label: 'Distance', value: '12.24 km' },
  { label: 'Pace', value: '30:11 /km' },
  { label: 'Time', value: '6h 9m' },
];

const actions = [
  { name: 'Give kudos', icon: ThumbIcon },
  { name: 'Comment', icon: CommentIcon },
  { name: 'Share', icon: ShareIcon },
];

const navItems = [
  { name: 'Home', icon: HomeIcon, color: 'text-black' },
  { name: 'Maps', icon: MapsIcon, color: 'text-black' },
  { name: 'Record', icon: RecordIcon, color: 'text-black' },
  { name: 'Groups', icon: GroupsIcon, color: 'text-black' },
  { name: 'You', icon: YouIcon, color: 'text-[#ff5200]' },
];

const StatusBar: React.FC = () => (
  <div className="grid grid-cols-[1fr_417px_1fr] items-center pt-[29px] font-['Inter',sans-serif]">
    <div className="flex items-center gap-3 pl-27 text-[48px] leading-none font-bold">
      7:56
      <LocationIcon />
    </div>
    <div className="h-[97px] rounded-full bg-black"></div>
    <div className="flex items-center justify-end gap-5 pr-[70px]">
      <SignalIcon />
      <span className="text-[34px] leading-none font-semibold">LTE</span>
      <div className="flex items-center gap-1">
        <div className="flex h-[39px] w-[75px] items-center justify-center rounded-xl bg-linear-to-r from-black from-28% to-[#b2b2b2] to-28% text-[35px] leading-none font-bold text-white">
          27
        </div>
        <div className="h-3 w-1 rounded-r-full bg-[#b2b2b2]"></div>
      </div>
    </div>
  </div>
);

const App: React.FC = () => {
  return (
    <div className="relative bg-white font-['Roboto',sans-serif] text-black">
      <StatusBar />

      <header className="grid grid-cols-3 items-center px-15 pt-11">
        <div className="ml-3 flex size-18 items-center justify-center rounded-full bg-[#004d40] text-[40px] text-white">K</div>
        <h1 className="text-center text-[50px] leading-none font-bold">You</h1>
        <div className="flex justify-end gap-18">
          <button aria-label="Add"><PlusIcon /></button>
          <button aria-label="Settings"><GearIcon /></button>
        </div>
      </header>

      <div className="border-b-3 border-[#dfe0df] px-18">
        <div className="-mb-[3px] grid grid-cols-3" role="tablist">
          {tabs.map((tab) => (
            <button key={tab.name} role="tab" aria-selected={tab.name === 'Activities'} className={`flex h-[196px] justify-center border-b-6 pt-[82px] text-[49px] leading-[56px] font-semibold ${tab.style}`}>
              <span className="relative">
                {tab.name}
                {tab.dot && <span className="absolute top-4 left-full ml-6 size-6 rounded-full bg-[#de2626]"></span>}
              </span>
            </button>
          ))}
        </div>
      </div>

      <div className="mt-16 h-[9px] bg-[#f1f1ef]"></div>

      <article>
        <div className="flex gap-9 px-18 pt-18">
          <div className="flex size-36 items-center justify-center rounded-full bg-[#004d40] text-[78px] text-white">K</div>
          <div>
            <h2 className="text-[38px] leading-[52px] font-bold">Jaehoon Kim</h2>
            <p className="mt-2.5 text-[32px] leading-[48px] text-[#444440]">July 19, 2026 at 4:43 PM · Strava App</p>
            <p className="mt-2 flex items-center gap-3 text-[33px] leading-[48px] text-[#444440]">
              <span className="text-black"><ShoeIcon /></span>
              Suji-gu, Gyeonggi
            </p>
          </div>
        </div>

        <h3 className="mt-[78px] px-18 text-[61px] leading-[72px] font-bold">Afternoon Run</h3>

        <dl className="mt-14 flex gap-[70px] px-18 pb-[77px]">
          {stats.map((stat) => (
            <div key={stat.label}>
              <dt className="text-[33px] leading-[40px] text-[#444440]">{stat.label}</dt>
              <dd className="mt-3 text-[52px] leading-[60px] font-bold">{stat.value}</dd>
            </div>
          ))}
        </dl>

        <RouteMap />

        <div className="grid grid-cols-3 pt-[82px] pb-[74px]">
          {actions.map((action) => (
            <button key={action.name} aria-label={action.name} className="flex justify-center">
              <action.icon />
            </button>
          ))}
        </div>
      </article>

      <div className="h-[9px] bg-[#f1f1ef]"></div>
      <div className="mt-[53px] h-3 bg-linear-to-b from-white to-[#f2f2f2]"></div>

      <nav className="grid h-60 grid-cols-5 pt-[15px]">
        {navItems.map((item) => (
          <a key={item.name} href="#" className={`flex flex-col items-center ${item.color}`}>
            <item.icon />
            <span className="mt-3.5 text-[33px] leading-[40px] font-semibold">{item.name}</span>
          </a>
        ))}
      </nav>

      {/* scroll indicator */}
      <div className="absolute top-[811px] right-[9px] h-[107px] w-2 rounded-full bg-[#c9c9c9]"></div>
    </div>
  );
};

export default App;
